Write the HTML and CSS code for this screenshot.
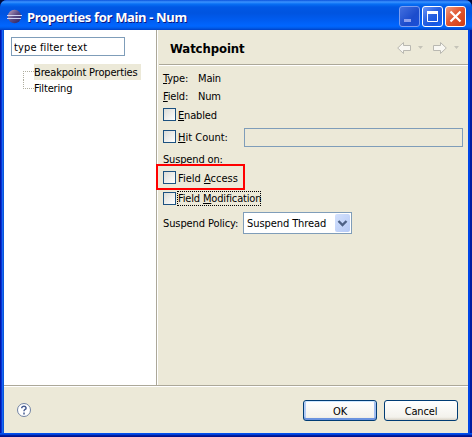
FILE: index.html
```html
<!DOCTYPE html>
<html lang="en">
<head>
<meta charset="utf-8">
<title>Properties for Main - Num</title>
<link rel="stylesheet" href="styles.css">
</head>
<body>
<div class="window">
  <header class="titlebar">
    <svg class="logo" width="15" height="15" viewBox="0 0 15 15">
      <defs><linearGradient id="orb" x1="0" x2="1" y1="0" y2="1"><stop offset="0" stop-color="#c3a5c0"/><stop offset=".5" stop-color="#594985"/><stop offset="1" stop-color="#2a2260"/></linearGradient></defs>
      <circle cx="7.5" cy="7.5" r="6.700" fill="url(#orb)"/>
      <path d="M0 6.500h15M0 9.500h14" stroke="#d0d4f4"/>
    </svg>
    <h1>Properties for Main - Num</h1>
    <div class="controls">
      <span class="ctl min"><svg width="19" height="19"><path d="M4 13.500h7" stroke="#8c9fec" stroke-width="3"/></svg></span>
      <span class="ctl max"><svg width="19" height="19"><path d="M4.500 5v9.500h10V5" fill="none" stroke="#fff"/><path d="M4 5.500h11" stroke="#fff" stroke-width="3"/></svg></span>
      <span class="ctl close"><svg width="19" height="19"><path d="M4.500 4.500l10 10M14.500 4.500l-10 10" stroke="#fff" stroke-width="2.200"/></svg></span>
    </div>
  </header>
  <div class="main">
    <nav class="tree">
      <input class="filter" value="type filter text">
      <ul>
        <li class="selected"><span>Breakpoint Properties</span></li>
        <li><span>Filtering</span></li>
      </ul>
    </nav>
    <section class="page">
      <div class="head">
        <h2>Watchpoint</h2>
        <svg width="64" height="16" viewBox="0 0 64 16" fill="#f8f7f2" stroke="#b9b8b1">
          <path d="M.700 8l5.800-5.500v3h7v5h-7v3z"/>
          <path d="M49.300 8l-5.800-5.500v3h-7v5h7v3z"/>
          <path d="M21 6h5l-2.500 3zM57 6h5l-2.500 3z" fill="#c5c3b8" stroke="none"/>
        </svg>
      </div>
      <div class="form">
        <div class="row r18"><span class="key"><u>T</u>ype:</span><span>Main</span></div>
        <div class="row r18"><span class="key"><u>F</u>ield:</span><span>Num</span></div>
        <label class="row r20"><i class="box"></i><span class="cap"><u>E</u>nabled</span></label>
        <div class="row r24"><i class="box"></i><span class="cap hitcap"><u>H</u>it Count:</span><input class="hit" disabled></div>
        <div class="row r18 lead"><span>Suspend on:</span></div>
        <label class="row r20 marked"><i class="box"></i><span class="cap access">Field <u>A</u>ccess</span></label>
        <label class="row r22"><i class="box"></i><span class="cap focus">Field <u>M</u>odification</span></label>
        <div class="row r26"><span class="policy">Suspend Policy:</span><div class="combo"><span>Suspend Thread</span><b><svg width="15" height="18"><path d="M3.500 7l4 4 4-4" fill="none" stroke="#4d6185" stroke-width="2.400"/></svg></b></div></div>
      </div>
    </section>
  </div>
  <footer>
    <svg class="help" width="16" height="16" viewBox="0 0 16 16"><circle cx="8" cy="8" r="6.500" fill="#fff" stroke="#7082a3"/><path d="M5.800 6.300V5.500Q6.200 4.300 8 4.300T10.100 5.900Q10.100 7 8.800 7.600Q8 8 8 9.300M8 10.500v2" fill="none" stroke="#465c91" stroke-width="1.500"/></svg>
    <button class="default">OK</button>
    <button>Cancel</button>
  </footer>
</div>
</body>
</html>
```
FILE: styles.css
```css
*, *::before, *::after { box-sizing: border-box; }
body {
  margin: 0;
  background: #000b3c;
  color: #000;
  font: 11px/18px "DejaVu Sans Condensed", Tahoma, sans-serif;
  letter-spacing: -0.16px;
  white-space: nowrap;
}
u { text-underline-offset: 1px; text-decoration-thickness: 1px; }
.window {
  width: 472px;
  height: 437px;
  display: flex;
  flex-direction: column;
  border-radius: 7px 7px 0 0;
  background: linear-gradient(90deg, #0019a8 0 1px, #0831d9 1px 2px, #166aee 2px 3px, #0855dd 3px 4px, #0047e0 4px 468px, #0045e5 468px 470px, #001ba0 470px);
  overflow: hidden;
  padding: 0 4px 4px;
  position: relative;
}
.window::after {
  content: "";
  position: absolute;
  inset: auto 0 0;
  height: 4px;
  background: linear-gradient(#0050ee 0 1px, #0441d8 1px 2px, #001ea0 2px 3px, #00138c 3px);
}
.titlebar {
  height: 30px;
  flex: none;
  margin: 0 -4px;
  padding: 1px 6px 0 7px;
  display: flex;
  align-items: center;
  background: linear-gradient(#0a52dc 0, #3b93ff 2px, #0870f4 4px, #0058e5 7px, #0054e0 13px, #005cf0 20px, #0066ff 26px, #005bea 28px, #0040c5 30px);
}
.logo { margin-top: 1px; }
h1 {
  margin: 3px 0 0 5px;
  flex: 1;
  color: #fff;
  font: bold 13px/18px "Noto Sans", sans-serif;
  letter-spacing: -0.33px;
  text-shadow: 1px 1px #0a1883;
}
.controls { display: flex; gap: 2px; margin-top: 2px; }
.ctl {
  width: 21px;
  height: 21px;
  border: 1px solid #fff;
  border-radius: 3px;
  background: linear-gradient(135deg, #6b95f8, #2860e0 45%, #1556e2 75%, #1768fb);
}
.ctl svg { display: block; }
.min { border-color: #7b9df0; background: linear-gradient(135deg, #4370df, #1c4ccc 60%, #1a4fd8); }
.close { background: linear-gradient(135deg, #f09b80, #e15732 45%, #cf3c12); }
.main { display: flex; height: 356px; border-bottom: 1px solid #aca899; }
.tree { width: 152px; background: #fff; padding: 7px; }
input { font: inherit; letter-spacing: inherit; outline: 0; border: 1px solid #7f9db9; border-radius: 0; margin: 0; }
.filter { display: block; width: 114px; height: 19px; padding: 1px 2px 0; letter-spacing: 0.14px; }
.tree ul { list-style: none; margin: 8px 0 0 12px; padding: 0; }
.tree li { height: 16px; display: flex; align-items: center; }
.tree li::before { content: ""; width: 11px; height: 9px; margin-top: 7px; border: dotted #b0ae9f; border-width: 1px 0 0 1px; }
.tree li + li::before { height: 9px; margin-top: -7px; border-width: 0 0 1px 1px; }
.tree li span { height: 16px; line-height: 14px; padding: 2px 0 0; width: 107px; }
.selected span { background: #ece9d8; }
.page { flex: 1; border-left: 1px solid #aca899; background: #ece9d8; box-shadow: inset 1px 0 #fff; }
.head {
  height: 36px;
  margin-left: 2px;
  padding: 1px 7px 0 11px;
  display: flex;
  align-items: center;
  justify-content: space-between;
  border-bottom: 1px solid #fff;
  box-shadow: inset 0 -1px #aca899;
}
h2 { margin: 0; padding-top: 1px; font: bold 13px/18px "DejaVu Sans Condensed", sans-serif; letter-spacing: -0.1px; }
.form { padding: 3px 4px 0 6px; }
.row { display: flex; align-items: center; }
.row span { padding-top: 2px; line-height: 14px; }
.r18 { height: 18px; }
.r20 { height: 20px; }
.r22 { height: 22px; }
.r24 { height: 24px; }
.r26 { height: 26px; }
.lead { margin-top: 1px; }
.key { width: 35px; }
.box { width: 13px; height: 13px; flex: none; margin-top: -1px; border: 1px solid #1c5180; background: linear-gradient(135deg, #dcdcd7, #fff); }
.cap { padding: 0 1px; margin-left: 1px; }
.hitcap { width: 67px; letter-spacing: 0; }
.access { letter-spacing: 0; }
.hit { width: 219px; height: 19px; background: #ece9d8; }
.marked { position: relative; }
.marked::after { content: ""; position: absolute; left: -7px; top: -4px; width: 89px; height: 26px; border: 2px solid #f00; }
.row .focus { outline: 1px dotted #000; outline-offset: -1px; width: 84px; height: 15px; padding-top: 1px; margin-top: -1px; }
.policy { width: 80px; letter-spacing: -0.1px; }
.combo { width: 109px; height: 22px; border: 1px solid #7f9db9; background: #fff; display: flex; align-items: center; justify-content: space-between; padding: 1px 1px 1px 3px; letter-spacing: -0.08px; }
.combo b { width: 15px; height: 18px; border-radius: 2px; background: linear-gradient(135deg, #d3e1fd, #b5c9f5); }
.combo svg { display: block; }
footer { flex: 1; display: flex; align-items: center; padding: 0 10px 0 12px; background: #ece9d8; border-top: 1px solid #fff; }
.help { margin-right: auto; }
button {
  font: inherit;
  letter-spacing: inherit;
  width: 74px;
  height: 21px;
  margin: 0 0 0 7px;
  padding: 2px 0 0;
  color: #000;
  border: 1px solid #003c74;
  border-radius: 3px;
  background: linear-gradient(#fff, #f3f2ec 85%, #d9d3c7);
}
.default { box-shadow: inset 0 1px #cee7ff, inset 0 -2px #6b93df, inset 2px 0 #b3ccf5, inset -2px 0 #a0bdf0; }
```
